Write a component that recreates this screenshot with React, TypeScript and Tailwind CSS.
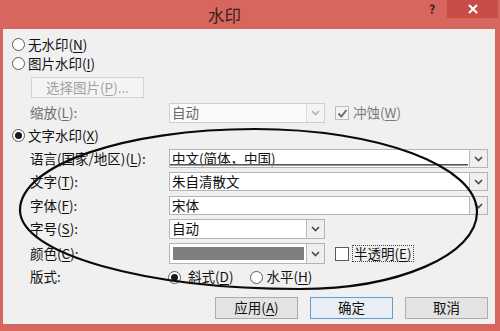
import React from 'react';

const FONT = { fontFamily: '"Noto Sans CJK SC", "Microsoft YaHei", sans-serif' };

// letter with mnemonic underline, e.g. (N)
const Key = ({ k }: { k: string }) => (
  <span>
    (<span className="underline underline-offset-2">{k}</span>)
  </span>
);

const Radio = ({ checked }: { checked?: boolean }) => (
  <span className="w-[13px] h-[13px] rounded-full border border-[#5a5a5a] bg-white flex items-center justify-center shrink-0">
    {checked && <span className="w-[7px] h-[7px] rounded-full bg-[#1a1a1a]" />}
  </span>
);

const Checkbox = ({ checked, disabled }: { checked?: boolean; disabled?: boolean }) => (
  <span
    className={`w-[14px] h-[14px] border flex items-center justify-center shrink-0 ${
      disabled ? 'border-[#bcbcbc] bg-[#f4f4f4]' : 'border-[#5a5a5a] bg-white'
    }`}
  >
    {checked && (
      <svg width="11" height="11" viewBox="0 0 11 11">
        <polyline points="1.5,5.5 4.3,8.5 9.5,2" fill="none" stroke={disabled ? '#6e6e6e' : '#222'} strokeWidth="2" />
      </svg>
    )}
  </span>
);

const Chevron = ({ disabled }: { disabled?: boolean }) => (
  <svg width="9" height="6" viewBox="0 0 9 6">
    <polyline points="1,1 4.5,4.5 8,1" fill="none" stroke={disabled ? '#b0b0b0' : '#4a4a4a'} strokeWidth="1.6" />
  </svg>
);

const Combo = ({
  text,
  width,
  disabled,
  swatch,
  underline,
}: {
  text?: string;
  width: string;
  disabled?: boolean;
  swatch?: boolean;
  underline?: boolean;
}) => (
  <div className={`${width} h-full flex border ${disabled ? 'border-[#cfcfcf] bg-[#fafafa]' : 'border-[#b4b4b4] bg-white'}`}>
    <div className={`flex-1 flex items-center pl-[2px] relative ${disabled ? 'text-[#6a6a6a]' : 'text-[#111]'}`}>
      {swatch ? <div className="w-full h-[13px] ml-[1px] mr-[2px] bg-[#7f7f7f]" /> : <span className="leading-none">{text}</span>}
      {underline && <div className="absolute left-0 right-[1px] bottom-[1px] h-[2px] bg-[#555] border-b border-[#999]" />}
    </div>
    <div
      className={`w-[18px] flex items-center justify-center border-l ${
        disabled ? 'border-[#dcdcdc] bg-[#f4f4f4]' : 'border-[#b9b9b9] bg-[#efefef]'
      }`}
    >
      <Chevron disabled={disabled} />
    </div>
  </div>
);

const Button = ({ children, primary }: { children: React.ReactNode; primary?: boolean }) => (
  <div
    className={`w-[83px] h-full flex items-center justify-center border text-[#111] ${
      primary ? 'border-[#5c9fd6] bg-[#e8eef4]' : 'border-[#adadad] bg-[#e3e3e3]'
    }`}
  >
    {children}
  </div>
);

export default function App() {
  return (
    <div className="w-[500px] h-[331px] bg-[#d6665e] flex flex-col relative overflow-hidden text-[13.5px]" style={FONT}>
      {/* title bar */}
      <div className="h-[29px] shrink-0 flex items-start">
        <div className="flex-1 text-center text-[16.5px] text-[#3b1f1c] pt-[3px] pl-[20px]">水印</div>
        <div className="w-[17px] h-[16px] pt-[1px] text-[12px] font-bold text-[#3b1f1c] leading-[15px]">?</div>
        <div className="w-[51px] h-[18px] ml-[1px] mr-[2px] bg-[#c84d46] flex items-center justify-center">
          <svg width="10" height="10" viewBox="0 0 10 10">
            <path d="M1 1 L9 9 M9 1 L1 9" stroke="#fff" strokeWidth="2" />
          </svg>
        </div>
      </div>

      {/* dialog body */}
      <div className="ml-[3px] mr-[5px] h-[295px] bg-[#f0f0f0] flex flex-col leading-none">
        <div className="mt-[6px] h-[19px] flex items-center pl-[9px] gap-[3px] text-[#111]">
          <Radio />
          <span>
            无水印<Key k="N" />
          </span>
        </div>
        <div className="h-[19px] flex items-center pl-[9px] gap-[3px] text-[#111]">
          <Radio />
          <span>
            图片水印<Key k="I" />
          </span>
        </div>
        <div className="mt-[4px] h-[21px] flex pl-[28px]">
          <div className="w-[113px] h-full border border-[#d4d4d4] bg-[#f4f4f4] text-[#a2a2a2] flex items-center justify-center">
            选择图片<Key k="P" />...
          </div>
        </div>
        <div className="mt-[5px] h-[20px] flex items-center">
          <div className="w-[166px] pl-[27px] text-[#6d6d6d]">
            缩放<Key k="L" />:
          </div>
          <Combo text="自动" width="w-[156px]" disabled />
          <div className="ml-[10px] flex items-center gap-[4px] text-[#7a7a7a]">
            <Checkbox checked disabled />
            <span>
              冲蚀<Key k="W" />
            </span>
          </div>
        </div>
        <div className="mt-[3px] h-[19px] flex items-center pl-[9px] gap-[3px] text-[#111]">
          <Radio checked />
          <span>
            文字水印<Key k="X" />
          </span>
        </div>
        <div className="mt-[4px] h-[19px] flex items-center text-[#111]">
          <div className="w-[166px] pl-[27px]">
            语言(国家/地区)<Key k="L" />:
          </div>
          <Combo text="中文(简体，中国)" width="w-[319px]" underline />
        </div>
        <div className="mt-[4px] h-[19px] flex items-center text-[#111]">
          <div className="w-[166px] pl-[27px]">
            文字<Key k="T" />:
          </div>
          <Combo text="朱自清散文" width="w-[319px]" />
        </div>
        <div className="mt-[5px] h-[19px] flex items-center text-[#111]">
          <div className="w-[166px] pl-[27px]">
            字体<Key k="F" />:
          </div>
          <Combo text="宋体" width="w-[319px]" />
        </div>
        <div className="mt-[4px] h-[20px] flex items-center text-[#111]">
          <div className="w-[166px] pl-[27px]">
            字号<Key k="S" />:
          </div>
          <Combo text="自动" width="w-[156px]" />
        </div>
        <div className="mt-[4px] h-[21px] flex items-center text-[#111]">
          <div className="w-[166px] pl-[27px]">
            颜色<Key k="C" />:
          </div>
          <Combo width="w-[156px]" swatch />
          <div className="ml-[10px] flex items-center gap-[3px]">
            <Checkbox />
            <span className="border border-dotted border-[#444] px-[1px] py-[1px]">
              半透明<Key k="E" />
            </span>
          </div>
        </div>
        <div className="mt-[4px] h-[18px] flex items-center text-[#111]">
          <div className="w-[165px] pl-[27px]">版式:</div>
          <Radio checked />
          <span className="ml-[7px]">
            斜式<Key k="D" />
          </span>
          <span className="ml-[17px]">
            <Radio />
          </span>
          <span className="ml-[3px]">
            水平<Key k="H" />
          </span>
        </div>
        <div className="mt-[11px] h-[22px] flex justify-end pr-[7px] gap-[12px]">
          <Button>
            应用<Key k="A" />
          </Button>
          <Button primary>确定</Button>
          <Button>取消</Button>
        </div>
      </div>

      {/* hand-drawn annotation ellipse */}
      <svg className="absolute inset-0 pointer-events-none" width="500" height="331" viewBox="0 0 500 331">
        <path
          d="M20 210 C20 165 125 129 255 129 C378 129 477 166 477 212 C477 255 398 289 300 289 C145 289 20 254 20 210 Z"
          fill="none"
          stroke="#0a0a0a"
          strokeWidth="2.2"
        />
      </svg>
    </div>
  );
}
